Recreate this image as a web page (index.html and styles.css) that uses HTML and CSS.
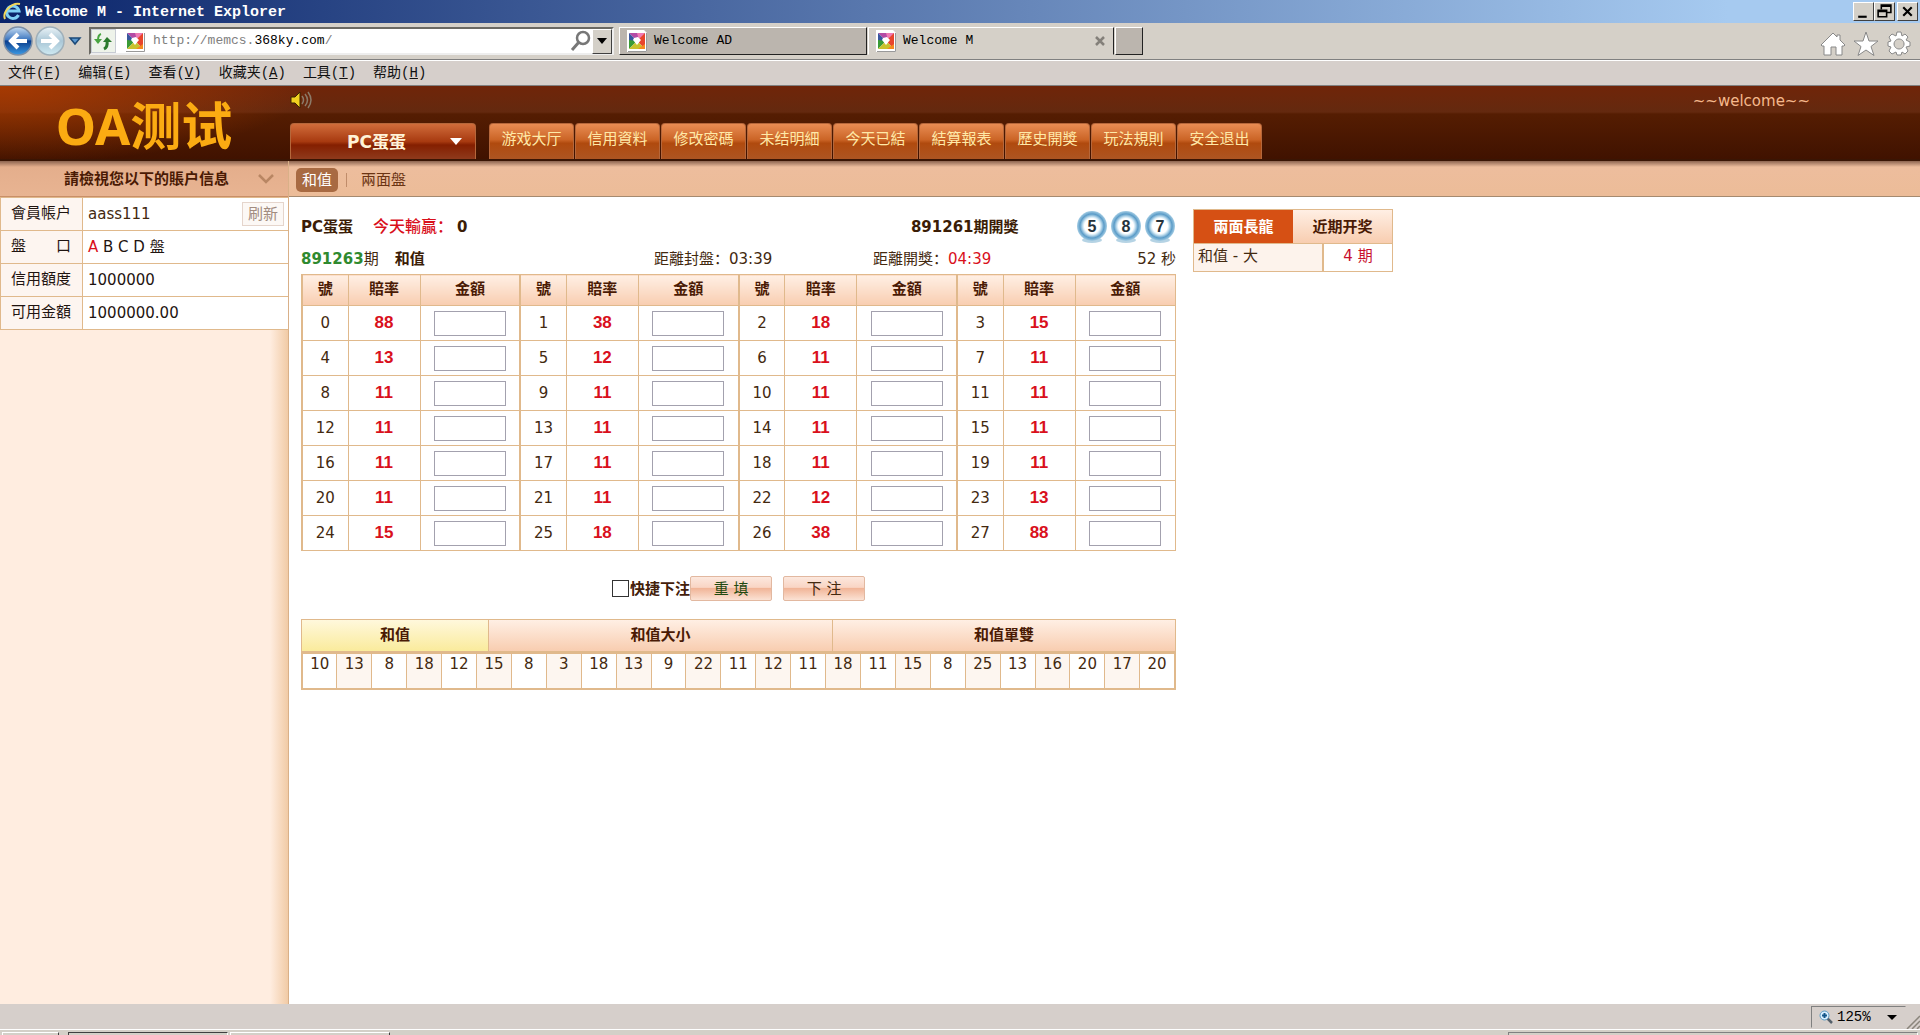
FILE: index.html
```html
<!DOCTYPE html>
<html lang="zh">
<head>
<meta charset="utf-8">
<title>Welcome M</title>
<link rel="stylesheet" href="styles.css">
</head>
<body>
<svg class="defs" width="0" height="0" aria-hidden="true">
  <defs>
    <symbol id="favicon" viewBox="0 0 20 22">
      <path d="M0 0h17l3 3v19H0z" fill="#fff"/><path d="M19.500 3v18.500H1" fill="none" stroke="#999"/>
      <path d="M2 3h16l-8 8z" fill="#b44ba5"/><path d="M10 3h8l-6 7z" fill="#f07ab4"/><path d="M18 3v16l-8-8z" fill="#e8452c"/>
      <path d="M2 3v8l8 0z" fill="#38569f"/><path d="M2 10v9l8-8z" fill="#3a9b35"/><path d="M2 19h16l-8-8z" fill="#c9c22c"/><path d="M11 19h7v-5z" fill="#f58a1f"/>
      <path d="M7 8l4-1 3 3-4 5-4-5z" fill="#fff"/>
    </symbol>
    <radialGradient id="ballFill"><stop offset=".5" stop-color="#fff"/><stop offset=".6" stop-color="#cfe6f3"/><stop offset=".8" stop-color="#5b9cc8"/><stop offset="1" stop-color="#a5cde4"/></radialGradient>
    <linearGradient id="backFill" x2="0" y2="1"><stop offset="0" stop-color="#c5dcf2"/><stop offset=".45" stop-color="#3f78c0"/><stop offset=".5" stop-color="#0b3d8c"/><stop offset="1" stop-color="#3c9ae4"/></linearGradient>
    <linearGradient id="fwdFill" x2="0" y2="1"><stop offset="0" stop-color="#eaf3f7"/><stop offset=".5" stop-color="#a9c6d6"/><stop offset="1" stop-color="#cfeaf2"/></linearGradient>
  </defs>
</svg>

<header class="titlebar">
  <svg class="ie" viewBox="0 0 19 19"><path d="M15.500 13a6.200 6.200 0 1 1 .5-4H5" fill="none" stroke="#7fd0f5" stroke-width="3"/><path d="M2 17C-1 10 9 0 17 2" fill="none" stroke="#f3d65a" stroke-width="2"/></svg>
  <span class="window-title">Welcome M - Internet Explorer</span>
  <div class="window-buttons">
    <button aria-label="最小化"><svg viewBox="0 0 16 14"><path d="M3 11h8v2H3z"/></svg></button>
    <button aria-label="还原"><svg viewBox="0 0 16 14"><path d="M5 5V1h9v7h-4M5 2h9M2 6h8v6H2zM2 7h8" fill="none" stroke="#000" stroke-width="1.500"/></svg></button>
    <button class="close" aria-label="关闭"><svg viewBox="0 0 16 14"><path d="M4 3l8 8M12 3l-8 8" fill="none" stroke="#000" stroke-width="2"/></svg></button>
  </div>
</header>

<div class="toolbar">
  <div class="history-buttons">
    <button class="plain" aria-label="后退"><svg width="32" height="32" viewBox="0 0 32 32"><circle cx="17" cy="16" r="14" fill="url(#backFill)" stroke="#7d8fa6" stroke-width="1.500"/><path d="M26 16H11M17 9l-7 7 7 7" fill="none" stroke="#fff" stroke-width="4"/></svg></button>
    <button class="plain" aria-label="前进"><svg width="32" height="32" viewBox="0 0 32 32"><circle cx="17" cy="16" r="14" fill="url(#fwdFill)" stroke="#9fb0ba" stroke-width="1.500"/><path d="M8 16h15M17 9l7 7-7 7" fill="none" stroke="#fff" stroke-width="4"/></svg></button>
    <button class="plain" aria-label="历史记录"><svg width="14" height="32" viewBox="0 0 14 32"><path d="M2 13h10l-5 6z" fill="#5a98d0" stroke="#1d4a78" stroke-width="1.500"/></svg></button>
  </div>
  <form class="address">
    <button type="button" class="reload" aria-label="刷新"><svg width="22" height="22" viewBox="0 0 22 22"><path d="M2 9h8l-4 5z" fill="#49a541"/><path d="M6 10q0-5 3-6" fill="none" stroke="#49a541" stroke-width="2"/><path d="M11 12h9l-5-5z" fill="#2c7a2e"/><path d="M15 11q1 6-3 8" fill="none" stroke="#2c7a2e" stroke-width="3"/></svg></button>
    <svg class="fav" width="20" height="22"><use href="#favicon"/></svg>
    <a class="url" href="#">http://memcs.<b>368ky.com</b>/</a>
    <svg class="search" width="22" height="22" viewBox="0 0 22 22"><circle cx="13" cy="8" r="6" fill="none" stroke="#777" stroke-width="2.500"/><path d="M9 12l-7 8" stroke="#777" stroke-width="3"/></svg>
    <button type="button" class="drop" aria-label="显示地址"><svg width="10" height="6" viewBox="0 0 10 6"><path d="M0 0h10L5 6z"/></svg></button>
  </form>
  <nav class="tabs">
    <button class="tab"><svg width="20" height="22"><use href="#favicon"/></svg>Welcome AD</button>
    <button class="tab current"><svg width="20" height="22"><use href="#favicon"/></svg>Welcome M<svg class="tab-close" width="12" height="12" viewBox="0 0 12 12"><path d="M2 2l8 8M10 2l-8 8" stroke="#84807a" stroke-width="2.500"/></svg></button>
    <button class="tab new" aria-label="新选项卡"></button>
  </nav>
  <div class="tools">
    <button class="plain" aria-label="主页"><svg width="26" height="26" viewBox="0 0 26 26"><path d="M1 14L13 2l4 4V4h3v5l5 5-1 1h-2v9h-6v-8h-5v8H4v-9H2z" fill="#fff" stroke="#888"/></svg></button>
    <button class="plain" aria-label="收藏"><svg width="26" height="26" viewBox="0 0 26 26"><path d="M13 1l3 9h9l-7 5.500 3 9L13 19l-8 5.500 3-9L1 10h9z" fill="#fff" stroke="#888"/></svg></button>
    <button class="plain" aria-label="设置"><svg width="26" height="26" viewBox="0 0 26 26"><path d="M11 1h4l1 4 3-2 3 3-2 3 4 2v4l-4 1 2 4-3 3-3-2-1 3h-4l-1-3-4 2-3-3 2-4-3-1v-4l3-1-2-4 3-3 4 2zM13 8a5 5 0 1 0 .1 0z" fill="#fff" fill-rule="evenodd" stroke="#888"/></svg></button>
  </div>
</div>

<nav class="menubar">
  <a href="#">文件(<u>F</u>)</a><a href="#">编辑(<u>E</u>)</a><a href="#">查看(<u>V</u>)</a><a href="#">收藏夹(<u>A</u>)</a><a href="#">工具(<u>T</u>)</a><a href="#">帮助(<u>H</u>)</a>
</nav>

<div class="page">
  <header class="banner">
    <h1 class="logo">OA测试</h1>
    <div class="banner-main">
      <div class="notice">
        <svg width="22" height="18" viewBox="0 0 22 18"><path d="M1 6h4l5-5v16l-5-5H1z" fill="#f0d020" stroke="#3a2500"/><path d="M12 5q3 4 0 8M15 3q5 6 0 12M18 1q6 8 0 16" fill="none" stroke="#8c7a68" stroke-width="1.500"/></svg>
        <span class="welcome">~~welcome~~</span>
      </div>
      <nav class="mainnav">
        <button class="game">PC蛋蛋<svg width="12" height="7" viewBox="0 0 12 7"><path d="M0 0h12L6 7z" fill="#fff"/></svg></button>
        <a href="#">游戏大厅</a><a href="#">信用資料</a><a href="#">修改密碼</a><a href="#">未结明細</a><a href="#">今天已結</a><a href="#">結算報表</a><a href="#">歷史開獎</a><a href="#">玩法規則</a><a href="#">安全退出</a>
      </nav>
    </div>
  </header>

  <div class="columns">
    <aside class="sidebar">
      <h2 class="side-title">請檢視您以下的賬戶信息<svg width="16" height="10" viewBox="0 0 16 10"><path d="M1 1l7 7 7-7" fill="none" stroke="#b98663" stroke-width="2.500"/></svg></h2>
      <table class="account">
        <tr><th>會員帳戶</th><td><div class="user">aass111<button class="refresh">刷新</button></div></td></tr>
        <tr><th><div class="spread"><span>盤</span><span>口</span></div></th><td><span class="red">A</span> B C D 盤</td></tr>
        <tr><th>信用額度</th><td>1000000</td></tr>
        <tr><th>可用金額</th><td>1000000.00</td></tr>
      </table>
    </aside>

    <main class="main">
      <nav class="subnav"><a class="on" href="#">和值</a><span class="sep"></span><a href="#">兩面盤</a></nav>
      <div class="content">
        <section class="board">
          <div class="line draw">
            <div><b>PC蛋蛋</b><strong class="today">今天輸贏：</strong><b>0</b></div>
            <b class="issue">891261期開獎</b>
            <div class="balls">
              <svg viewBox="0 0 32 34"><ellipse cx="16" cy="30" rx="10" ry="3" fill="#b5d3e4"/><circle cx="16" cy="16" r="15" fill="url(#ballFill)"/><text x="16" y="22">5</text></svg>
              <svg viewBox="0 0 32 34"><ellipse cx="16" cy="30" rx="10" ry="3" fill="#b5d3e4"/><circle cx="16" cy="16" r="15" fill="url(#ballFill)"/><text x="16" y="22">8</text></svg>
              <svg viewBox="0 0 32 34"><ellipse cx="16" cy="30" rx="10" ry="3" fill="#b5d3e4"/><circle cx="16" cy="16" r="15" fill="url(#ballFill)"/><text x="16" y="22">7</text></svg>
            </div>
          </div>
          <div class="line timer">
            <div><b class="green">891263</b>期<b class="play">和值</b></div>
            <div>距離封盤：03:39</div>
            <div>距離開獎：<span class="red">04:39</span></div>
            <div class="end">52 秒</div>
          </div>
          <table class="odds">
            <colgroup><col class="n"><col class="r"><col><col class="n"><col class="r"><col><col class="n"><col class="r"><col><col class="n"><col class="r"><col></colgroup>
            <thead><tr><th>號</th><th>賠率</th><th>金額</th><th>號</th><th>賠率</th><th>金額</th><th>號</th><th>賠率</th><th>金額</th><th>號</th><th>賠率</th><th>金額</th></tr></thead>
            <tbody>
              <tr><td>0</td><td>88</td><td><input aria-label="0"></td><td>1</td><td>38</td><td><input aria-label="1"></td><td>2</td><td>18</td><td><input aria-label="2"></td><td>3</td><td>15</td><td><input aria-label="3"></td></tr>
              <tr><td>4</td><td>13</td><td><input aria-label="4"></td><td>5</td><td>12</td><td><input aria-label="5"></td><td>6</td><td>11</td><td><input aria-label="6"></td><td>7</td><td>11</td><td><input aria-label="7"></td></tr>
              <tr><td>8</td><td>11</td><td><input aria-label="8"></td><td>9</td><td>11</td><td><input aria-label="9"></td><td>10</td><td>11</td><td><input aria-label="10"></td><td>11</td><td>11</td><td><input aria-label="11"></td></tr>
              <tr><td>12</td><td>11</td><td><input aria-label="12"></td><td>13</td><td>11</td><td><input aria-label="13"></td><td>14</td><td>11</td><td><input aria-label="14"></td><td>15</td><td>11</td><td><input aria-label="15"></td></tr>
              <tr><td>16</td><td>11</td><td><input aria-label="16"></td><td>17</td><td>11</td><td><input aria-label="17"></td><td>18</td><td>11</td><td><input aria-label="18"></td><td>19</td><td>11</td><td><input aria-label="19"></td></tr>
              <tr><td>20</td><td>11</td><td><input aria-label="20"></td><td>21</td><td>11</td><td><input aria-label="21"></td><td>22</td><td>12</td><td><input aria-label="22"></td><td>23</td><td>13</td><td><input aria-label="23"></td></tr>
              <tr><td>24</td><td>15</td><td><input aria-label="24"></td><td>25</td><td>18</td><td><input aria-label="25"></td><td>26</td><td>38</td><td><input aria-label="26"></td><td>27</td><td>88</td><td><input aria-label="27"></td></tr>
            </tbody>
          </table>
          <div class="actions">
            <label><input type="checkbox">快捷下注</label>
            <button class="act green-text">重 填</button>
            <button class="act second">下 注</button>
          </div>
          <div class="trend-tabs"><button class="on">和值</button><button>和值大小</button><button>和值單雙</button></div>
          <table class="trend"><tr><td>10</td><td>13</td><td>8</td><td>18</td><td>12</td><td>15</td><td>8</td><td>3</td><td>18</td><td>13</td><td>9</td><td>22</td><td>11</td><td>12</td><td>11</td><td>18</td><td>11</td><td>15</td><td>8</td><td>25</td><td>13</td><td>16</td><td>20</td><td>17</td><td>20</td></tr></table>
        </section>
        <aside class="streaks">
          <div class="streak-tabs"><button class="on">兩面長龍</button><button>近期开奖</button></div>
          <table><tr><td class="name">和值 - 大</td><td class="count">4 期</td></tr></table>
        </aside>
      </div>
    </main>
  </div>
</div>

<footer class="statusbar">
  <button class="zoom"><svg width="14" height="14" viewBox="0 0 14 14"><path d="M8 8l5 5" stroke="#55606a" stroke-width="2.500"/><circle cx="5.500" cy="5.500" r="4.500" fill="#d8efff" stroke="#5c9cc4"/><path d="M3 5.500h5M5.500 3v5" stroke="#14578a" stroke-width="2"/></svg><span>125%</span><svg class="arrow" width="10" height="5" viewBox="0 0 10 5"><path d="M0 0h10L5 5z"/></svg></button>
  <svg class="grip" width="14" height="14" viewBox="0 0 14 14"><path d="M1 14L14 1M6 14l8-8M11 14l3-3" stroke="#8a857c" stroke-width="1.500"/></svg>
</footer>
<div class="taskbar"><i class="start"></i><i class="task pressed"></i><i class="task"></i><i class="tray"></i></div>
</body>
</html>
```
FILE: styles.css
```css
* { box-sizing: border-box; }
body {
  margin: 0;
  min-height: 100vh;
  display: flex;
  flex-direction: column;
  background: #fff;
  color: #43290f;
  font: 15px/20px "DejaVu Sans", "Noto Sans CJK TC", sans-serif;
}
a { color: inherit; text-decoration: none; }
button { font: inherit; color: inherit; padding: 0; border: 0; background: none; }
table { border-collapse: collapse; }
svg { display: block; flex: none; }
.defs { position: absolute; }
.red { color: #d9101c; }
.green { color: #2f8a2f; }

/* browser window */
.titlebar {
  height: 23px;
  display: flex;
  align-items: center;
  padding: 0 2px 0 3px;
  background: linear-gradient(90deg, #0a246a, #a6caf0 90%);
}
.ie { width: 19px; height: 19px; }
.window-title {
  margin-left: 3px;
  padding-top: 2px;
  color: #fff;
  font: bold 15px/20px "Liberation Mono", monospace;
}
.window-buttons { display: flex; margin-left: auto; }
.window-buttons button {
  width: 21px;
  height: 19px;
  padding: 1px;
  background: #d4d0c8;
  border: 1px solid;
  border-color: #fff #404040 #404040 #fff;
}
.window-buttons .close { margin-left: 2px; }
.toolbar {
  height: 37px;
  display: flex;
  align-items: center;
  padding: 0 8px 0 1px;
  background: #d5d0c8;
  border-bottom: 1px solid #808080;
}
.history-buttons { display: flex; width: 88px; }
.history-buttons button:last-child { margin-left: 3px; }
.address {
  flex: none;
  width: 525px;
  height: 28px;
  display: flex;
  align-items: center;
  background: #fff;
  border: 2px solid;
  border-color: #6b6963 #eee #eee #6b6963;
}
.reload { width: 25px; height: 24px; background: #eef3ea; border: 1px solid #c8ccd4; }
.fav { margin: 0 8px 0 9px; }
.url, .tab { font: 13px/20px "Liberation Mono", monospace; color: #808080; }
.url b { font-weight: normal; color: #000; }
.search { margin-left: auto; }
.drop {
  width: 20px;
  height: 25px;
  display: grid;
  place-items: center;
  background: #d4d0c8;
  border: 1px solid;
  border-color: #fff #404040 #404040 #fff;
}
.tabs { display: flex; flex: none; margin-left: 5px; gap: 1px; }
.tab {
  width: 248px;
  height: 28px;
  display: flex;
  align-items: center;
  gap: 7px;
  padding: 0 7px;
  color: #000;
  background: #bbb5ae;
  border: 1px solid;
  border-color: #fff #222 #222 #fff;
}
.tab.current { width: 246px; background: #d5d0c8; border-bottom-color: #d5d0c8; }
.tab.new { width: 28px; }
.tab-close { margin-left: auto; }
.tools { display: flex; gap: 7px; margin-left: auto; padding-top: 6px; }
.menubar {
  height: 26px;
  display: flex;
  align-items: center;
  gap: 17px;
  padding: 0 8px;
  background: #d6cfcb;
  border-top: 1px solid #fff;
  border-bottom: 1px solid #808080;
  color: #111;
  font: 14px/20px "Liberation Mono", "Noto Sans CJK SC", monospace;
}

/* site banner */
.page { flex: 1; display: flex; flex-direction: column; }
.banner {
  height: 75px;
  display: flex;
  background: linear-gradient(#702509, #64290f 26px, #551d02 28px, #401200);
  border-bottom: 2px solid #3a1504;
}
.logo {
  flex: none;
  width: 290px;
  margin: 0;
  padding-right: 2px;
  text-align: center;
  color: #fbab12;
  background: radial-gradient(ellipse at 0 0, #a63a02, #74260300 75%);
  font: bold 51px/78px "Noto Sans", "Noto Sans CJK SC", sans-serif;
}
.banner-main { flex: 1; display: flex; flex-direction: column; justify-content: space-between; }
.notice { display: flex; justify-content: space-between; padding: 5px 110px 0 0; }
.welcome { color: #f5b98c; }
.mainnav { display: flex; gap: 1px; }
.mainnav a, .game {
  height: 36px;
  border: 1px solid #b5673b;
  border-bottom: 0;
  border-radius: 4px 4px 0 0;
}
.mainnav a {
  width: 85px;
  text-align: center;
  line-height: 31px;
  color: #ffe9a8;
  background: linear-gradient(#e88c53, #cb6426 45%, #b04a0e 55%, #ad5522);
}
.mainnav .game {
  width: 186px;
  display: flex;
  align-items: center;
  justify-content: flex-end;
  gap: 44px;
  padding-right: 13px;
  margin-right: 12px;
  color: #fff3d8;
  font-weight: bold;
  font-size: 17px;
  background: linear-gradient(#d06c3b, #a83a10 50%, #841f00 60%, #8f3a1c);
}

/* account panel */
.columns { flex: 1; display: flex; }
.sidebar {
  flex: none;
  width: 289px;
  background: linear-gradient(90deg, #ffede0 270px, #f1cba6);
  border-right: 1px solid #d9b088;
}
.side-title {
  height: 36px;
  display: flex;
  align-items: center;
  justify-content: flex-end;
  gap: 29px;
  margin: 0;
  padding-right: 14px;
  color: #4a1a04;
  font-size: 15px;
  background: linear-gradient(#8c6450, #e4ae8c 6px, #e8b492);
  border-bottom: 1px solid #c98f68;
}
.account { width: 100%; background: #fff; }
.account th, .account td { height: 33px; border: 1px solid #e0b98c; text-align: left; color: #1f1410; }
.account th { width: 82px; padding: 0 11px 2px 10px; font-weight: normal; background: #fdf5f0; white-space: nowrap; }
.account td { padding: 0 4px 0 5px; }
.account td:last-child { border-right: 0; }
.account .red { color: #d9101c; }
.spread, .user { display: flex; justify-content: space-between; align-items: center; }
.user { color: #43290f; }
.refresh { padding: 1px 5px; color: #a28c80; border: 1px solid #e5d5cc; background: #fcf8f5; }

/* betting area */
.main { flex: 1; }
.subnav {
  height: 36px;
  display: flex;
  align-items: center;
  padding: 3px 7px 0;
  color: #6b3413;
  background: linear-gradient(#8c6450, #edbd9d 6px, #ecbc98);
  border-bottom: 1px solid #a58a70;
}
.subnav a { padding: 2px 6px; }
.subnav .on { color: #fff; background: #a86a42; border-radius: 5px; }
.sep { width: 1px; height: 14px; margin: 0 8px; background: #c08c6a; }
.content { display: flex; align-items: flex-start; gap: 17px; padding: 12px 12px 0; }
.board { flex: none; width: 875px; }
.line { display: flex; align-items: center; }
.line b { color: #3b1d06; }
.line .green { color: #2f8a2f; }
.draw { height: 35px; justify-content: space-between; }
.today { margin: 0 4px 0 20px; font-size: 16px; font-weight: 500; color: #d9101c; }
.issue { margin-left: 386px; }
.balls { display: flex; gap: 2px; }
.balls svg { width: 32px; height: 34px; }
.balls text { font: bold 16px "Liberation Sans", sans-serif; text-anchor: middle; fill: #26333c; }
.timer { display: grid; grid-template-columns: 353px 219px 1fr 60px; height: 30px; }
.play { margin-left: 16px; }
.end { text-align: right; }
.odds { width: 100%; table-layout: fixed; text-align: center; border: 1px solid #e0b98c; }
.odds .n { width: 46px; }
.odds .r { width: 72px; }
.odds th, .trend-tabs button {
  height: 31px;
  padding: 0 0 2px;
  font-weight: bold;
  color: #4a1a04;
  background: linear-gradient(#ffefe4, #f8cdb0);
}
.odds th, .odds td { border: 1px solid #e0b98c; }
.odds td { height: 35px; padding: 0; }
.odds tr > :nth-child(3n + 1) { border-left-width: 2px; }
.odds td:nth-child(3n + 2) { font: bold 17px/20px "Liberation Sans", sans-serif; color: #d9101c; }
.odds input {
  display: block;
  width: 72px;
  height: 25px;
  margin: 0 auto;
  background: #fff;
  border: 1px solid #a3a1ae;
}
.actions { display: flex; align-items: center; padding: 25px 0 18px 311px; }
.actions label { display: flex; align-items: center; gap: 1px; font-weight: bold; color: #43200a; }
.actions input { appearance: none; width: 17px; height: 17px; margin: 0; border: 1px solid #333; background: #fff; }
.act {
  width: 82px;
  height: 25px;
  border: 1px solid #e2b8a0;
  border-radius: 2px;
  background: linear-gradient(#fce8de, #f9d5c4 45%, #f1b598 50%, #fbe2d4);
}
.green-text { color: #1f4a10; }
.second { margin-left: 11px; }
.trend-tabs { display: grid; grid-template-columns: 186px 344px 1fr; border: 1px solid #e0b98c; }
.trend-tabs button + button { border-left: 1px solid #e0b98c; }
.trend-tabs .on { background: linear-gradient(#fff8dc, #faeb9c); }
.trend { width: 100%; table-layout: fixed; text-align: center; border: 2px solid #e0b98c; }
.trend td { height: 36px; padding: 0; vertical-align: top; border-left: 1px solid #e0b98c; }
.trend td:nth-child(even) { background: #fdf6f0; }

.streaks { flex: none; width: 200px; border: 1px solid #e0b98c; }
.streak-tabs { display: grid; grid-template-columns: 99px 1fr; }
.streak-tabs button { height: 33px; font-weight: bold; color: #4a1a04; background: linear-gradient(#ffefe4, #f8cdb0); }
.streak-tabs .on { color: #fff; background: #d65014; }
.streaks table { width: 100%; }
.streaks td { height: 27px; padding: 0 4px 2px; border-top: 1px solid #e0b98c; }
.streaks .name { width: 129px; background: #fdf3ec; }
.streaks .count { text-align: center; color: #c8102e; border-left: 2px solid #e0b98c; }

/* bottom of the window */
.statusbar {
  height: 26px;
  display: flex;
  justify-content: flex-end;
  background: #d6cfcb;
  border-bottom: 1px solid #fff;
}
.zoom {
  width: 95px;
  height: 22px;
  display: flex;
  align-items: center;
  gap: 4px;
  margin-top: 2px;
  padding-left: 7px;
  color: #000;
  font: 14px/20px "Liberation Mono", monospace;
  border: 1px solid;
  border-color: #808080 transparent transparent #808080;
}
.arrow { margin-left: 12px; }
.grip { align-self: flex-end; }
.taskbar {
  height: 5px;
  display: flex;
  align-items: flex-end;
  gap: 2px;
  padding: 0 2px;
  background: #d4d0c8;
}
.taskbar i { height: 3px; border: 1px solid; border-color: #fff #404040 transparent #fff; border-bottom: 0; }
.start { width: 57px; margin-right: 7px; }
.task { width: 160px; }
.taskbar .pressed { border-color: #404040 #fff transparent #404040; }
.taskbar .tray { width: 410px; margin-left: auto; border-color: #808080 #fff transparent #808080; }
```
